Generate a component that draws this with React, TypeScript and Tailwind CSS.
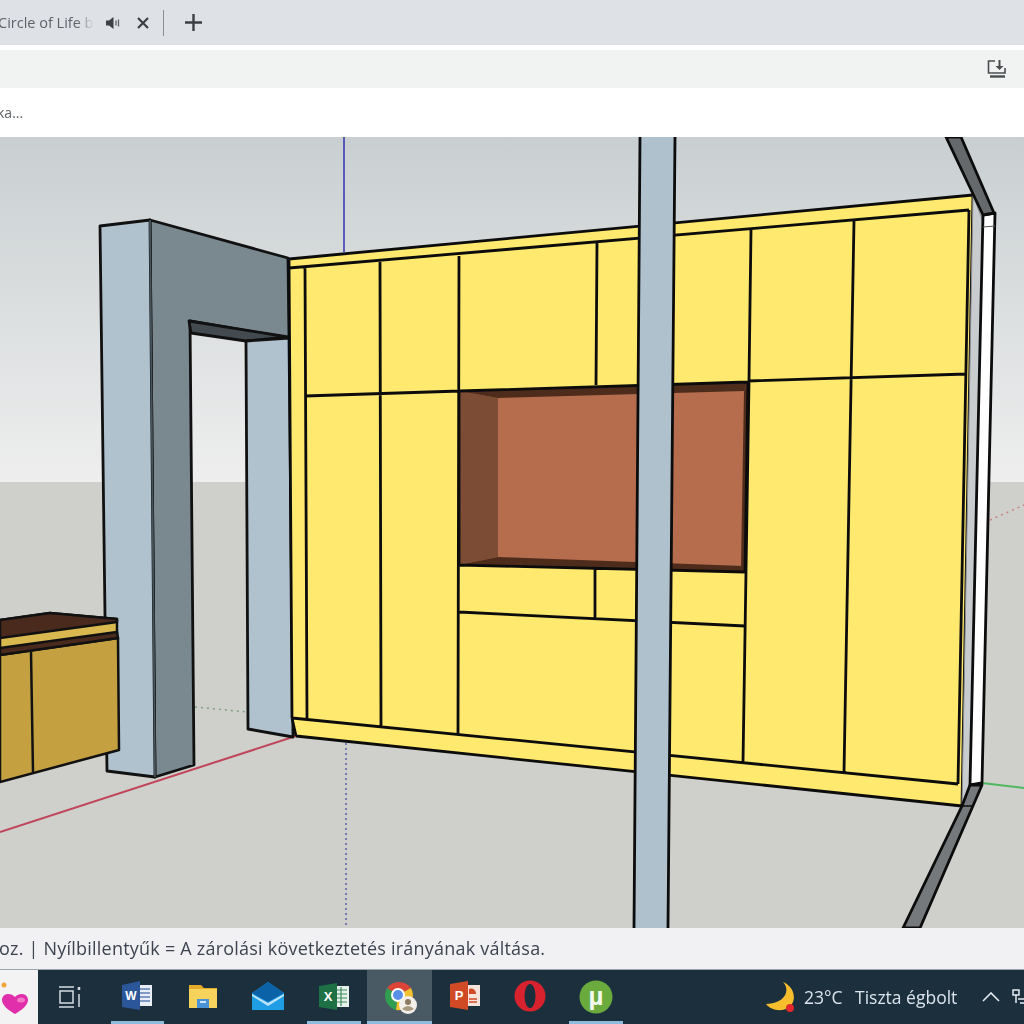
const font = 'font-["Open_Sans","Liberation_Sans",sans-serif]';

const blackLines = [
  // cabinet outline and plinth
  'M289 259 L973 195', 'M289 268 L969 210', 'M289 259 L292 718', 'M292 718 L958 784',
  'M296 736 L962 806', 'M973 195 L962 806', 'M969 210 L958 784', 'M292 718 L296 736',
  // door fronts
  'M305 268 L307 718', 'M380 262 L381 726', 'M459 256 L458 734', 'M597 243 L596 385',
  'M751 230 L749 381 L743 762', 'M854 221 L844 772',
  'M305 396 L460 391', 'M748 381 L966 374', 'M595 569 L595 618', 'M459 612 L745 626',
  'M748 382 L745 572 L459 565 L459 391 L748 382',
];

function Scene() {
  return (
    <svg viewBox="0 137 1024 791" className="block h-[791px] w-full blur-[0.5px]">
      <defs>
        <linearGradient id="sky" gradientUnits="userSpaceOnUse" x1="0" y1="137" x2="0" y2="482">
          <stop offset="0" stopColor="#c9cfd1" />
          <stop offset="1" stopColor="#eeeeee" />
        </linearGradient>
      </defs>
      <rect x="0" y="137" width="1024" height="345" fill="url(#sky)" />
      <rect x="0" y="482" width="1024" height="446" fill="#cfcfcb" />

      {/* axes */}
      <path d="M344 137 V252" stroke="#2f34b0" strokeWidth="1.5" />
      <path d="M346 738 V928" stroke="#5a5fa8" strokeWidth="1.5" strokeDasharray="2 3" />
      <path d="M296 736 L0 832" stroke="#c0455a" strokeWidth="2" />
      <path d="M982 783 L1024 788" stroke="#4fb85f" strokeWidth="2" />
      <path d="M990 520 L1024 505" stroke="#c98080" strokeWidth="1.5" strokeDasharray="2 4" />
      <path d="M195 707 L247 712" stroke="#7fa184" strokeWidth="1.5" strokeDasharray="2 4" />

      {/* door frame */}
      <g stroke="#111" strokeWidth="2.8" strokeLinejoin="round">
        <polygon points="150,220 288,258 289,338 190,321 194,765 155,777" fill="#7a8890" />
        <polygon points="100,226 150,220 155,777 107,771" fill="#b1c2cf" />
        <path d="M150 220 L155 777" stroke="#47545b" strokeWidth="1.8" fill="none" />
        <polygon points="189,321 288,337 246,341 191,333" fill="#434a50" />
        <polygon points="246,341 289,338 293,737 248,729" fill="#b1c2cf" />
      </g>

      {/* low cabinet */}
      <g stroke="#111" strokeWidth="2.5" strokeLinejoin="round">
        <polygon points="0,655 118,638 119,750 0,782" fill="#c5a041" />
        <polygon points="0,620 50,613 117,619 117,634 0,653" fill="#d9b84f" />
        <polygon points="0,620 50,613 117,619 117,622 0,638" fill="#4b2a1e" />
        <polygon points="0,648 117,632 118,638 0,655" fill="#4b2a1e" />
        <path d="M31 652 L33 772" fill="none" />
      </g>

      {/* wall cabinet */}
      <polygon points="289,259 973,195 962,806 296,736 292,718" fill="#ffe96e" />
      <polygon points="459,391 748,382 745,572 459,565" fill="#b56d4e" />
      <polygon points="459,391 498,398 498,557 459,565" fill="#7d4c35" />
      <polygon points="459,391 748,382 744,391 498,398" fill="#4e2c1c" />
      <polygon points="459,565 498,557 743,566 745,572" fill="#4e2c1c" />
      <polygon points="744,391 748,382 745,572 741,566" fill="#4e2c1c" />
      <path d={blackLines.join(' ')} fill="none" stroke="#0c0c0c" strokeWidth="2.8" strokeLinejoin="round" />

      {/* side return of the wall */}
      <g stroke="#0c0c0c" strokeWidth="2.8" strokeLinejoin="round">
        <polygon points="973,195 983,222 970,785 962,806" fill="#c9ccce" stroke="#8d9093" strokeWidth="1" />
        <polygon points="983,215 995,213 982,783 970,785" fill="#ffffff" />
        <path d="M983 227 L995 226" fill="none" strokeWidth="1" stroke="#555" />
        <polygon points="946,137 961,137 994,213 983,215" fill="#66696c" />
        <polygon points="903,928 920,928 982,785 970,785 962,806" fill="#76797c" />
        <path d="M960 806 L972 806" fill="none" strokeWidth="1.5" />
      </g>

      {/* pillar in front */}
      <polygon points="640,137 675,137 668,928 634,928" fill="#b0c1ce" />
      <path d="M640 137 L634 928 M675 137 L668 928" fill="none" stroke="#0c0c0c" strokeWidth="2.8" />
    </svg>
  );
}

function WordIcon() {
  return (
    <svg width="34" height="34" viewBox="0 0 34 34">
      <rect x="17" y="5" width="15" height="21" fill="#e9eef6" />
      <path d="M20 9 H30 M20 13 H30 M20 17 H30 M20 21 H30" stroke="#5c7fb8" strokeWidth="1.5" />
      <polygon points="2,5 20,1 20,30 2,27" fill="#2b579a" />
      <text x="11" y="20" textAnchor="middle" fontSize="12" fontWeight="700" fill="#fff" fontFamily="Liberation Sans, sans-serif">W</text>
    </svg>
  );
}

function FolderIcon() {
  return (
    <svg width="34" height="34" viewBox="0 0 34 34">
      <path d="M3 5 H15 L18 8 H31 V28 H3 Z" fill="#e3aa2b" />
      <rect x="3" y="9" width="28" height="19" fill="#f7d35c" />
      <path d="M11 19 H23 V28 H11 Z" fill="#4a93d6" />
      <rect x="14" y="21" width="6" height="2" fill="#cfe6f8" />
    </svg>
  );
}

function MailIcon() {
  return (
    <svg width="34" height="34" viewBox="0 0 34 34">
      <polygon points="1,13 17,2 33,13 33,30 1,30" fill="#1f9ee6" />
      <polygon points="1,13 17,2 33,13 17,22" fill="#0c62a6" />
      <polygon points="1,14 17,23 33,14 33,16 17,26 1,16" fill="#bfe4fa" />
    </svg>
  );
}

function ExcelIcon() {
  return (
    <svg width="34" height="34" viewBox="0 0 34 34">
      <rect x="17" y="6" width="15" height="21" fill="#e6f1ea" />
      <path d="M19 10 H30 M19 14 H30 M19 18 H30 M19 22 H30 M24 7 V26" stroke="#3f8a60" strokeWidth="1.2" />
      <polygon points="2,6 20,3 20,30 2,27" fill="#1e7145" />
      <text x="11" y="21" textAnchor="middle" fontSize="13" fontWeight="700" fill="#fff" fontFamily="Liberation Sans, sans-serif">X</text>
    </svg>
  );
}

function ChromeIcon() {
  return (
    <svg width="34" height="34" viewBox="0 0 34 34" className="overflow-visible">
      <path d="M16 15 L5 8 A15 15 0 0 1 29 8 Z" fill="#db4437" />
      <path d="M16 15 L5 8 A15 15 0 0 0 14 30 Z" fill="#2f9e50" />
      <path d="M16 15 L29 8 A15 15 0 0 1 14 30 Z" fill="#f2c230" />
      <circle cx="16" cy="15" r="7" fill="#fff" />
      <circle cx="16" cy="15" r="5" fill="#5a8fe8" />
      <circle cx="26" cy="25" r="9" fill="#f2efe8" />
      <circle cx="26" cy="22" r="3" fill="#8c7a62" />
      <path d="M20 29 Q26 23 32 29 Q26 33 20 29 Z" fill="#a9997f" />
    </svg>
  );
}

function PowerPointIcon() {
  return (
    <svg width="34" height="34" viewBox="0 0 34 34">
      <rect x="17" y="5" width="15" height="21" fill="#f6e3dc" />
      <path d="M21 9 A5 5 0 0 1 28 14 H21 Z" fill="#d04a26" />
      <path d="M21 19 H29 M21 22 H29" stroke="#d04a26" strokeWidth="1.5" />
      <polygon points="2,4 20,1 20,30 2,27" fill="#d04a26" />
      <text x="11" y="20" textAnchor="middle" fontSize="13" fontWeight="700" fill="#fff" fontFamily="Liberation Sans, sans-serif">P</text>
    </svg>
  );
}

function OperaIcon() {
  return (
    <svg width="34" height="34" viewBox="0 0 34 34">
      <circle cx="17" cy="16" r="15.5" fill="#d8232f" />
      <ellipse cx="17" cy="16" rx="5.5" ry="12" fill="#1b2e3b" />
    </svg>
  );
}

function TorrentIcon() {
  return (
    <svg width="34" height="34" viewBox="0 0 34 34">
      <circle cx="17" cy="17" r="16.5" fill="#6bab3e" />
      <text x="17" y="25" textAnchor="middle" fontSize="26" fontWeight="700" fill="#f2f8ec" fontFamily="Liberation Sans, sans-serif">µ</text>
    </svg>
  );
}

function TaskViewIcon() {
  return (
    <svg className="-ml-1" width="22" height="22" viewBox="0 0 22 22" fill="none" stroke="#d5dde3" strokeWidth="1.5">
      <path d="M0 1 H15 M0 21 H15" />
      <rect x="1" y="5" width="13" height="12" />
      <path d="M20 8 V21" />
      <path d="M20 1 V4" strokeWidth="2.5" />
    </svg>
  );
}

const taskIcons = [
  { icon: <TaskViewIcon />, state: 'none' },
  { icon: <WordIcon />, state: 'open' },
  { icon: <FolderIcon />, state: 'none' },
  { icon: <MailIcon />, state: 'none' },
  { icon: <ExcelIcon />, state: 'open' },
  { icon: <ChromeIcon />, state: 'active' },
  { icon: <PowerPointIcon />, state: 'none' },
  { icon: <OperaIcon />, state: 'none' },
  { icon: <TorrentIcon />, state: 'open' },
];

function Taskbar() {
  return (
    <footer className={`flex h-[54px] shrink-0 items-stretch overflow-hidden bg-[#1b2f3c] pl-px ${font}`}>
      <div className="-ml-px flex w-[38px] shrink-0 items-center bg-[#f3f3f3]">
        <svg width="36" height="54" viewBox="0 0 36 54">
          <circle cx="4" cy="15" r="2.5" fill="#f2a33a" />
          <path d="M15 44 C8 40 2 35 2 30 C2 23 11 22 15 27 C19 22 28 23 28 30 C28 35 22 40 15 44 Z" fill="#e12fab" />
          <ellipse cx="21" cy="30" rx="4" ry="2.5" fill="#f27ac8" />
        </svg>
      </div>
      <div className="w-px shrink-0" />
      {taskIcons.map((item, i) => (
        <div
          key={i}
          className={`relative flex w-[65.5px] shrink-0 items-center justify-center ${item.state === 'active' ? 'bg-[#4a5a65]' : ''}`}
        >
          {item.icon}
          {item.state === 'active' && <span className="absolute inset-x-0 bottom-0 h-[3px] bg-[#8fbbdc]" />}
          {item.state === 'open' && <span className="absolute inset-x-[6px] bottom-0 h-[3px] bg-[#8fbbdc]" />}
        </div>
      ))}
      <div className="ml-[135.5px] flex shrink-0 items-center text-[17.5px] whitespace-nowrap text-[#dbe4ec] blur-[0.3px]">
        <svg width="32" height="32" viewBox="0 0 32 32">
          <path d="M19 1 C26 8 23 22 2 23 C8 31 24 32 29 21 C32 13 27 4 19 1 Z" fill="#f6bd2c" />
          <circle cx="26" cy="27" r="4" fill="#e6262e" />
        </svg>
        <span className="ml-[8px] w-[51px]">23°C</span>
        <span className="w-[127px]">Tiszta égbolt</span>
        <svg width="18" height="10" viewBox="0 0 18 10" fill="none" stroke="#e6edf2" strokeWidth="1.6">
          <path d="M1 9 L9 1 L17 9" />
        </svg>
        <svg className="ml-[12px] shrink-0" width="20" height="18" viewBox="0 0 20 18" fill="none" stroke="#e6edf2" strokeWidth="1.5">
          <path d="M1 2 H7 V7 H1 Z M4 7 V15 M6 11 H20 M8 15 H20" />
        </svg>
      </div>
    </footer>
  );
}

export default function App() {
  return (
    <div className={`flex h-[1024px] w-[1024px] flex-col overflow-hidden bg-white ${font}`}>
      <div className="flex h-[45px] shrink-0 items-center bg-[#dee1e6] text-[#5f6368]">
        <span className="-ml-[2px] w-[96px] overflow-hidden text-[14.5px] whitespace-nowrap blur-[0.3px] [mask-image:linear-gradient(to_right,black_82%,transparent)]">
          Circle of Life by
        </span>
        <svg className="ml-[11px]" width="16" height="14" viewBox="0 0 16 14">
          <path d="M1 4.5 H4 L8.5 1 V13 L4 9.5 H1 Z" fill="#3c4043" />
          <path d="M11 4.5 V9.5 M13.5 3.5 V10.5" stroke="#5f6368" strokeWidth="1.3" />
        </svg>
        <svg className="ml-[16px]" width="12" height="12" viewBox="0 0 12 12" stroke="#3c4043" strokeWidth="2.2">
          <path d="M1 1 L11 11 M11 1 L1 11" />
        </svg>
        <span className="ml-[14px] h-[26px] w-px bg-[#8b8f94]" />
        <svg className="ml-[21px]" width="17" height="17" viewBox="0 0 17 17" stroke="#3c4043" strokeWidth="2.4">
          <path d="M8.5 0 V17 M0 8.5 H17" />
        </svg>
      </div>
      <div className="h-[5px] shrink-0 bg-white" />
      <div className="flex h-[38px] shrink-0 items-center justify-end bg-[#f1f3f2] pr-[17px]">
        <svg width="20" height="20" viewBox="0 0 20 20" fill="none" stroke="#4a4d50" strokeWidth="1.6">
          <path d="M8 2 H1.5 V14 H18 V9" />
          <path d="M3 17.5 H18" strokeWidth="2.4" />
          <path d="M12.5 1 V9" strokeWidth="2" />
          <path d="M8.5 7 L12.5 11 L16.5 7 Z" fill="#4a4d50" stroke="none" />
        </svg>
      </div>
      <div className="flex h-[49px] shrink-0 items-center bg-white text-[14px] text-[#5f6368] blur-[0.3px]">
        <span className="-ml-[3px]">ka...</span>
      </div>
      <div className="h-[791px] shrink-0 overflow-hidden">
        <Scene />
      </div>
      <div className="flex h-[42px] shrink-0 items-center border-b border-[#9aa5ad] bg-[#f1f1f3] text-[18px] tracking-[0.22px] whitespace-nowrap text-[#3d4450] blur-[0.3px]">
        <span className="-ml-[1px]">oz. | Nyílbillentyűk = A zárolási következtetés irányának váltása.</span>
      </div>
      <Taskbar />
    </div>
  );
}
